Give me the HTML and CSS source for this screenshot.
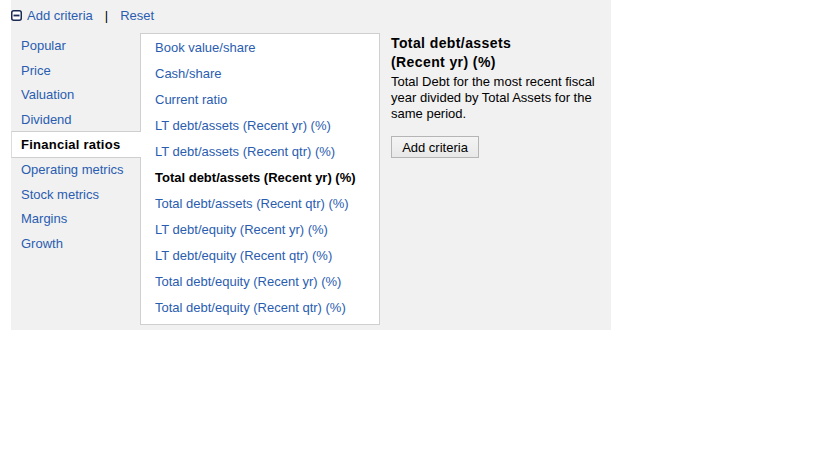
FILE: index.html
```html
<!DOCTYPE html>
<html>
<head>
<meta charset="utf-8">
<link rel="stylesheet" href="styles.css">
</head>
<body>
<div class="panel">
  <div class="header">
    <svg class="minus-icon" width="11" height="11" viewBox="0 0 11 11">
      <rect x="0.75" y="0.75" width="9.5" height="9.5" rx="2" ry="2" fill="#fff" stroke="#1a2a55" stroke-width="1.5"/>
      <rect x="2.5" y="4.6" width="6" height="1.8" fill="#1a2a55"/>
    </svg>
    <a class="link" href="#">Add criteria</a>
    <span class="sep">|</span>
    <a class="link" href="#">Reset</a>
  </div>
  <div class="content">
    <ul class="nav">
      <li class="nav-item">Popular</li>
      <li class="nav-item">Price</li>
      <li class="nav-item">Valuation</li>
      <li class="nav-item">Dividend</li>
      <li class="nav-item selected">Financial ratios</li>
      <li class="nav-item">Operating metrics</li>
      <li class="nav-item">Stock metrics</li>
      <li class="nav-item">Margins</li>
      <li class="nav-item">Growth</li>
    </ul>
    <ul class="list">
      <li class="list-item">Book value/share</li>
      <li class="list-item">Cash/share</li>
      <li class="list-item">Current ratio</li>
      <li class="list-item">LT debt/assets (Recent yr) (%)</li>
      <li class="list-item">LT debt/assets (Recent qtr) (%)</li>
      <li class="list-item active">Total debt/assets (Recent yr) (%)</li>
      <li class="list-item">Total debt/assets (Recent qtr) (%)</li>
      <li class="list-item">LT debt/equity (Recent yr) (%)</li>
      <li class="list-item">LT debt/equity (Recent qtr) (%)</li>
      <li class="list-item">Total debt/equity (Recent yr) (%)</li>
      <li class="list-item">Total debt/equity (Recent qtr) (%)</li>
    </ul>
    <div class="detail">
      <div class="detail-title">Total debt/assets<br>(Recent yr) (%)</div>
      <div class="detail-desc">Total Debt for the most recent fiscal year divided by Total Assets for the same period.</div>
      <button class="add-btn">Add criteria</button>
    </div>
  </div>
</div>
</body>
</html>
```

FILE: styles.css
```css
html, body {
  margin: 0;
  padding: 0;
  background: #fff;
}
body {
  font-family: "Liberation Sans", Arial, sans-serif;
  font-size: 13px;
  color: #000;
}
.panel {
  margin-left: 11px;
  width: 600px;
  height: 330px;
  background: #f1f1f1;
  box-sizing: border-box;
}
.header {
  height: 33px;
  box-sizing: border-box;
  padding-top: 8px;
  display: flex;
  align-items: flex-start;
  line-height: 16px;
}
.minus-icon {
  display: block;
  margin-top: 2px;
  margin-right: 5px;
}
.link {
  color: #2a5db0;
  text-decoration: none;
}
.sep {
  color: #000;
  margin: 0 12px 0 12px;
}
.content {
  display: flex;
  align-items: flex-start;
}
.nav {
  list-style: none;
  margin: 0;
  padding: 1px 0 0 0;
  width: 129px;
}
.nav-item {
  height: 24.5px;
  line-height: 24.5px;
  padding-left: 10px;
  color: #2a5db0;
  white-space: nowrap;
}
.nav-item.selected {
  position: relative;
  z-index: 1;
  margin-top: -1px;
  margin-right: -1px;
  height: 25px;
  line-height: 26px;
  background: #fff;
  color: #000;
  font-weight: bold;
  letter-spacing: 0.25px;
  border-top: 1px solid #cfcfcf;
  border-bottom: 1px solid #cfcfcf;
  border-left: 1px solid #dcdcdc;
  padding-left: 9px;
}
.list {
  list-style: none;
  margin: 0;
  padding: 1px 0 3px 0;
  width: 238px;
  background: #fff;
  border: 1px solid #cfcfcf;
}
.list-item {
  height: 26px;
  line-height: 26px;
  padding-left: 14px;
  color: #2a5db0;
  white-space: nowrap;
}
.list-item.active {
  color: #000;
  font-weight: bold;
}
.detail {
  margin-left: 11px;
  width: 216px;
}
.detail-title {
  font-size: 14px;
  font-weight: bold;
  letter-spacing: 0.4px;
  line-height: 19px;
  margin-top: 1px;
}
.detail-desc {
  font-size: 13px;
  line-height: 16px;
  margin-top: 2px;
}
.add-btn {
  margin-top: 14px;
  width: 88px;
  height: 22px;
  padding: 0;
  font-family: "Liberation Sans", Arial, sans-serif;
  font-size: 13px;
  color: #000;
  background: linear-gradient(#f4f4f4, #e8e8e8);
  border: 1px solid #b5b5b5;
  border-radius: 0;
}
```
